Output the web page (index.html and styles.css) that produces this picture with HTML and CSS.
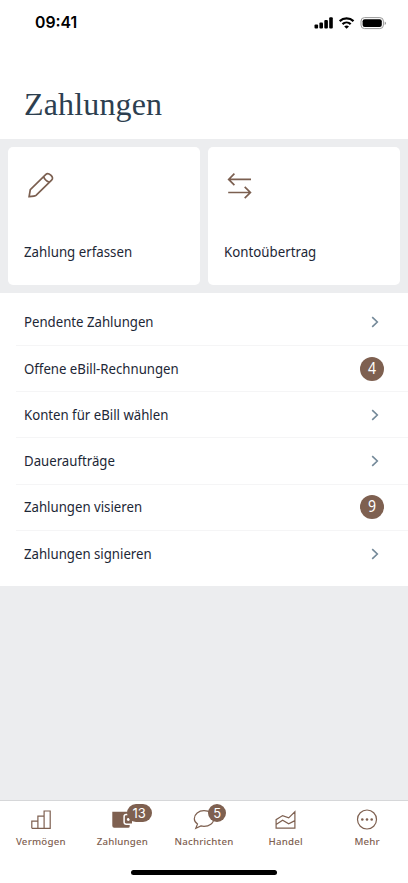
FILE: index.html
```html
<!DOCTYPE html>
<html lang="de">
<head>
<meta charset="utf-8">
<meta name="viewport" content="width=device-width, initial-scale=1">
<title>Zahlungen</title>
<link rel="stylesheet" href="styles.css">
</head>
<body>
<div class="app">
  <header class="header">
    <div class="status">
      <span class="time">09:41</span>
      <svg class="status-icons" width="74" height="16" viewBox="0 0 74 16">
        <rect x="0.5" y="9.5" width="3.6" height="4" rx="1"/>
        <rect x="5.4" y="7.6" width="3.6" height="5.9" rx="1"/>
        <rect x="10.3" y="5" width="3.6" height="8.5" rx="1"/>
        <rect x="15.2" y="2.3" width="3.6" height="11.2" rx="1"/>
        <g class="wifi"><path d="M25.7 6.1a10.1 10.1 0 0 1 13.8 0"/><path d="M28.5 9.1a6 6 0 0 1 8.2 0"/></g>
        <path d="M30.2 11.5a3.6 3.6 0 0 1 4.8 0L32.6 13.8z"/>
        <rect class="shell" x="47" y="2.6" width="22.4" height="11" rx="3.5"/>
        <rect x="48.6" y="4.2" width="19.2" height="7.8" rx="2.1"/>
        <path class="cap" d="M70.7 6.5c1.8.7 1.8 2.9 0 3.6z"/>
      </svg>
    </div>
    <h1>Zahlungen</h1>
  </header>
  <section class="cards">
    <a class="card">
      <svg class="icon" width="30" height="30" viewBox="0 0 30 30"><path d="M5.1 26.6 6.3 19.6 21.9 4.3Q23.8 2.4 26.8 5.2T27.6 10.1L12 25.4Q11 26.3 5.1 26.6ZM19.6 6.6Q20.9 10.8 25.3 12.3"/></svg>
      <span>Zahlung erfassen</span>
    </a>
    <a class="card">
      <svg class="icon" width="30" height="30" viewBox="0 0 30 30"><path d="M27 9.4H4.7M10.4 3.7 4.7 9.4l5.7 5.7M4.2 22.5h22.2M20.7 16.8l5.7 5.7-5.7 5.7"/></svg>
      <span>Kontoübertrag</span>
    </a>
  </section>
  <main class="list">
    <a class="row"><span>Pendente Zahlungen</span><svg class="chev" width="8" height="12" viewBox="0 0 8 12"><path d="M1.2 1.2 6.3 6l-5.1 4.8"/></svg></a>
    <a class="row"><span>Offene eBill-Rechnungen</span><b class="count"><i>4</i></b></a>
    <a class="row"><span>Konten für eBill wählen</span><svg class="chev" width="8" height="12" viewBox="0 0 8 12"><path d="M1.2 1.2 6.3 6l-5.1 4.8"/></svg></a>
    <a class="row"><span>Daueraufträge</span><svg class="chev" width="8" height="12" viewBox="0 0 8 12"><path d="M1.2 1.2 6.3 6l-5.1 4.8"/></svg></a>
    <a class="row"><span>Zahlungen visieren</span><b class="count"><i>9</i></b></a>
    <a class="row"><span>Zahlungen signieren</span><svg class="chev" width="8" height="12" viewBox="0 0 8 12"><path d="M1.2 1.2 6.3 6l-5.1 4.8"/></svg></a>
  </main>
  <footer class="bottom">
    <nav class="tabs">
      <a class="tab"><svg width="24" height="24" viewBox="0 0 24 24"><path d="M2.8 21.3v-7.1h6.1v7.1M8.9 14.2V9.1h6.2v12.2M15.1 9.1V4h6.1v17.3H2.8"/></svg><span>Vermögen</span></a>
      <a class="tab">
        <svg width="24" height="24" viewBox="0 0 24 24"><path class="solid" d="M2.3 4.8h15.9a1.5 1.5 0 0 1 1.5 1.5v12.9a1.5 1.5 0 0 1-1.5 1.5H4.2a1.9 1.9 0 0 1-1.9-1.9z"/><path class="clasp" d="M22 7.5h-5.9a2 2 0 0 0-2 2v5.7a2 2 0 0 0 2 2H22"/><circle class="clasp-dot" cx="18.3" cy="12.5" r="1.4"/></svg>
        <span>Zahlungen</span><b class="badge wide">13</b></a>
      <a class="tab"><svg width="24" height="24" viewBox="0 0 24 24"><path d="M5.5 17C3.2 15.4 2.3 13.5 2.3 11.7 2.3 7.1 6.7 3.7 12 3.7s9.7 3.4 9.7 8-4.4 7.6-9.7 7.6c-1.1 0-2.1-.1-3.1-.4L3.8 21.3z"/></svg><span>Nachrichten</span><b class="badge">5</b></a>
      <a class="tab"><svg width="24" height="24" viewBox="0 0 24 24"><path d="M2.1 21.2V12.7L8.6 8.6l6.1 2.3 6.2-6.1v16.4zM2.1 17.4l6.5-4.2 6.1 3.6 6.2-3.2"/></svg><span>Handel</span></a>
      <a class="tab"><svg width="24" height="24" viewBox="0 0 24 24"><circle cx="12" cy="12.5" r="9.5"/><g class="dots"><circle cx="7.3" cy="12.5" r="1.3"/><circle cx="12" cy="12.5" r="1.3"/><circle cx="16.7" cy="12.5" r="1.3"/></g></svg><span>Mehr</span></a>
    </nav>
    <div class="home"></div>
  </footer>
</div>
</body>
</html>
```
FILE: styles.css
```css
* { box-sizing: border-box; }
body { margin: 0; background: #ecedef; color: #1d2736; font-family: "Noto Sans", sans-serif; }
svg { display: block; fill: none; }
.app { height: 883px; display: flex; flex-direction: column; }
.header { height: 139px; background: #fff; }
.status { height: 46px; padding: 0 20px 0 35px; display: flex; justify-content: space-between; align-items: center; }
.time { font: 600 15.8px/20px Inter, sans-serif; color: #000; }
.status-icons { fill: #000; margin-top: -1px; }
.wifi { fill: none; stroke: #000; stroke-width: 2.2; }
.shell { fill: none; stroke: #999; }
.cap { fill: #999; }
h1 { margin: 38px 0 0 24px; font: 400 32px/40px "Liberation Serif", serif; letter-spacing: .15px; color: #2d3f50; }
.cards { height: 154px; padding: 8px; display: grid; grid-template-columns: 1fr 1fr; gap: 8px; }
.card { background: #fff; border-radius: 5px; padding: 23px 16px 24px; display: flex; flex-direction: column; justify-content: space-between; }
.card span, .row span { font-size: 15.3px; line-height: 20px; white-space: nowrap; transform: scaleX(.863); transform-origin: left; }
.card span { transform: scaleX(.868); }
.icon { stroke: #7b5f50; stroke-width: 1.7; }
.list { height: 293px; padding: 6.6px 0 0 16px; background: #fff; }
.row { height: 46.3px; padding: 0 24px 0 8px; display: flex; align-items: center; justify-content: space-between; border-bottom: 1px solid #f5f5f6; }
.row span { margin-top: -2px; }
.row:last-child { border-bottom: 0; }
.chev { margin-right: 5.5px; stroke: #748999; stroke-width: 1.6; }
.count { width: 24px; height: 24px; border-radius: 50%; background: #7e6050; color: #fff; font-weight: 400; font-size: 16px; line-height: 23px; text-align: center; }
.count i { display: block; font-style: normal; transform: scaleX(.88); }
.bottom { height: 83px; margin-top: auto; border-top: 1px solid #d6d7d9; background: #fff; display: flex; flex-direction: column; align-items: center; }
.tabs { width: 100%; height: 69px; display: grid; grid-template-columns: repeat(5, 1fr); }
.tab { position: relative; padding-top: 6px; display: flex; flex-direction: column; align-items: center; color: #7e6050; }
.tab svg { stroke: #7e6050; stroke-width: 1.2; }
.tab span { margin-top: 4px; font-size: 9.7px; line-height: 14px; font-weight: 500; letter-spacing: .2px; }
.tab .solid { fill: #7e6050; stroke: none; }
.tab .clasp { fill: #7e6050; stroke: #fff; stroke-width: 1.5; }
.tab .clasp-dot { fill: #fff; stroke: none; }
.dots { fill: #7e6050; stroke: none; }
.badge { position: absolute; top: 3px; left: 45px; min-width: 18px; height: 18px; border-radius: 9px; background: #7e6050; color: #fff; font: 400 13px/18px Inter, sans-serif; text-align: center; }
.badge.wide { width: 25px; }
.home { width: 146px; height: 5px; border-radius: 3px; background: #000; }
```
